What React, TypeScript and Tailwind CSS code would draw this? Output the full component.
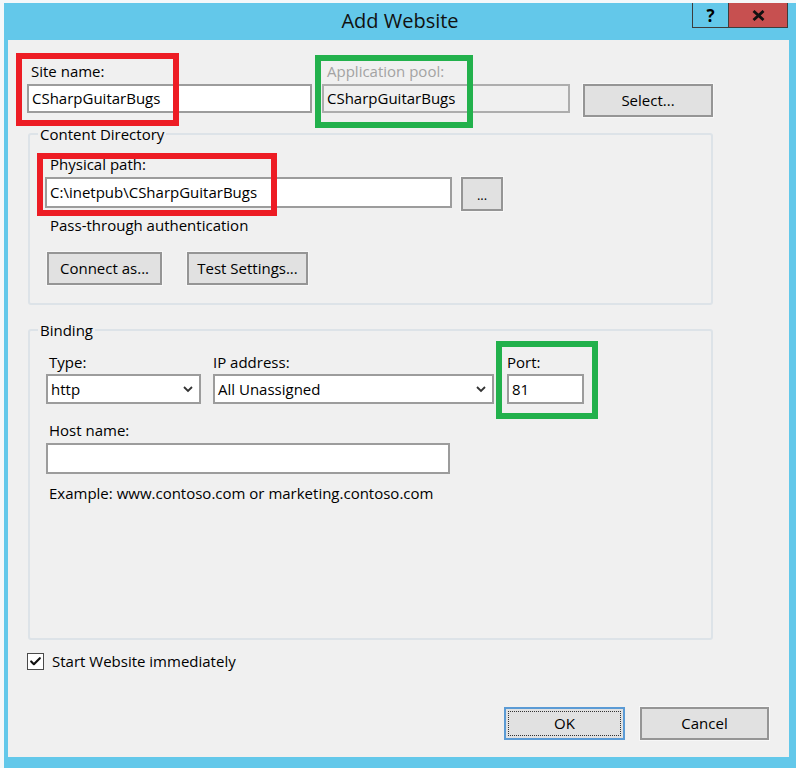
import { Check } from "lucide-react";
import type { ReactNode } from "react";

const Label = ({ children, className = "" }: { children: ReactNode; className?: string }) => (
  <div className={"h-[20px] leading-[20px] whitespace-nowrap " + className}>{children}</div>
);

const TextBox = ({ children, className = "" }: { children?: ReactNode; className?: string }) => (
  <div className={"flex items-center border-2 border-[#9c9c9c] pl-[3px] whitespace-nowrap " + className}>
    {children}
  </div>
);

const Button = ({ children, className = "" }: { children: ReactNode; className?: string }) => (
  <div
    className={
      "flex items-center justify-center border-2 border-[#959595] bg-[#e1e1e1] shadow-[0_0_0_1px_#f7f7f7] whitespace-nowrap " +
      className
    }
  >
    {children}
  </div>
);

const Chevron = () => (
  <svg width="10" height="7" viewBox="0 0 10 7" className="mr-[6px] shrink-0">
    <polyline points="1,1 5,5 9,1" fill="none" stroke="#333" strokeWidth="1.8" />
  </svg>
);

const Select = ({ value, className = "" }: { value: string; className?: string }) => (
  <div className={"flex items-center justify-between border-2 border-[#9c9c9c] bg-white pl-[3px] " + className}>
    <span>{value}</span>
    <Chevron />
  </div>
);

// red and green boxes drawn over the dialog in the screenshot
const Mark = ({ className }: { className: string }) => (
  <div className={"pointer-events-none absolute border-[6px] " + className} />
);

export default function App() {
  return (
    <div className="flex h-[768px] w-[796px] bg-[#f4f8fa] pl-[4px] pt-[3px] font-['Open_Sans',sans-serif] text-[15px] text-black">
      <div className="flex flex-1 flex-col bg-[#63c8ea] pb-[11px] pl-[4px] pr-[7px]">
        {/* TITLE BAR */}
        <div className="-ml-[4px] -mr-[7px] flex h-[37px] items-start">
          <div className="w-[104px]" />
          <div className="flex-1 pt-[4px] text-center text-[20px] leading-[28px] text-[#111]">Add Website</div>
          <div className="flex w-[104px] pr-[8px]">
            <div className="flex h-[25px] w-[37px] items-center justify-center border border-t-0 border-[#3d3d3d] text-[17px] font-bold leading-none">
              ?
            </div>
            <div className="flex h-[25px] w-[59px] items-center justify-center border border-l-0 border-t-0 border-[#3d3d3d] bg-[#c75050]">
              <svg width="13" height="11" viewBox="0 0 13 11">
                <path d="M1.5 1 L11.5 10 M11.5 1 L1.5 10" stroke="#111" strokeWidth="2.8" />
              </svg>
            </div>
          </div>
        </div>

        {/* CLIENT AREA */}
        <div className="relative flex flex-1 flex-col bg-[#f0f0f0] pl-[19px]">
          {/* SITE NAME ROW */}
          <div className="mt-[21px] flex items-start">
            <div className="w-[285px]">
              <Label className="pl-[4px]">Site name:</Label>
              <TextBox className="mt-[3px] h-[29px] bg-white">CSharpGuitarBugs</TextBox>
            </div>
            <div className="ml-[10px] w-[248px]">
              <Label className="pl-[5px] text-[#a3a3a3]">Application pool:</Label>
              <TextBox className="mt-[3px] h-[29px] border-[#adadad] bg-[#f0f0f0]">CSharpGuitarBugs</TextBox>
            </div>
            <Button className="ml-[13px] mt-[23px] h-[33px] w-[130px]">Select...</Button>
          </div>

          {/* CONTENT DIRECTORY */}
          <fieldset className="ml-[1px] mt-[7px] w-[685px] rounded-[3px] border-2 border-[#dde3e8] pb-[18px]">
            <legend className="ml-[8px] px-[2px] leading-[20px]">Content Directory</legend>
            <div className="pl-[15px]">
              <Label className="mt-[10px] pl-[5px]">Physical path:</Label>
              <div className="mt-[3px] flex items-start">
                <TextBox className="h-[31px] w-[407px] bg-white">C:\inetpub\CSharpGuitarBugs</TextBox>
                <Button className="ml-[9px] h-[34px] w-[42px] pt-[4px] text-[13px]">...</Button>
              </div>
              <Label className="mt-[4px] pl-[5px]">Pass-through authentication</Label>
              <div className="mt-[17px] flex">
                <Button className="ml-[2px] h-[33px] w-[115px]">Connect as...</Button>
                <Button className="ml-[25px] h-[33px] w-[121px]">Test Settings...</Button>
              </div>
            </div>
          </fieldset>

          {/* BINDING */}
          <fieldset className="ml-[1px] mt-[15px] w-[685px] rounded-[3px] border-2 border-[#dde3e8] pb-[135px]">
            <legend className="ml-[8px] px-[2px] leading-[20px]">Binding</legend>
            <div className="pl-[16px]">
              <div className="mt-[12px] flex items-start">
                <div className="w-[155px]">
                  <Label className="pl-[3px]">Type:</Label>
                  <Select value="http" className="mt-[2px] h-[30px]" />
                </div>
                <div className="ml-[12px] w-[281px]">
                  <Label>IP address:</Label>
                  <Select value="All Unassigned" className="mt-[2px] h-[30px]" />
                </div>
                <div className="ml-[13px] w-[77px]">
                  <Label>Port:</Label>
                  <TextBox className="mt-[2px] h-[30px] bg-white">81</TextBox>
                </div>
              </div>
              <Label className="mt-[16px] pl-[3px]">Host name:</Label>
              <TextBox className="mt-[3px] h-[31px] w-[404px] bg-white" />
              <Label className="mt-[9px] pl-[3px]">Example: www.contoso.com or marketing.contoso.com</Label>
            </div>
          </fieldset>

          {/* START CHECKBOX */}
          <div className="mt-[11px] flex h-[20px] items-center">
            <div className="flex h-[17px] w-[17px] items-center justify-center border border-[#4a4a4a] bg-white">
              <Check size={13} strokeWidth={4} color="#111" />
            </div>
            <span className="ml-[8px] leading-[20px]">Start Website immediately</span>
          </div>

          {/* OK / CANCEL */}
          <div className="mt-[36px] flex justify-end pr-[20px]">
            <div className="flex h-[33px] w-[121px] items-center justify-center border-2 border-[#5b9bd5] bg-[#e1e1e1] p-[2px]">
              <div className="flex h-full w-full items-center justify-center border border-dotted border-[#333]">OK</div>
            </div>
            <Button className="ml-[15px] h-[33px] w-[129px]">Cancel</Button>
          </div>

          <Mark className="left-[8px] top-[13px] h-[73px] w-[163px] border-[#ed1c24]" />
          <Mark className="left-[307px] top-[15px] h-[73px] w-[158px] border-[#22b14c]" />
          <Mark className="left-[29px] top-[113px] h-[63px] w-[240px] border-[#ed1c24]" />
          <Mark className="left-[488px] top-[301px] h-[78px] w-[102px] border-[#22b14c]" />
        </div>
      </div>
    </div>
  );
}
